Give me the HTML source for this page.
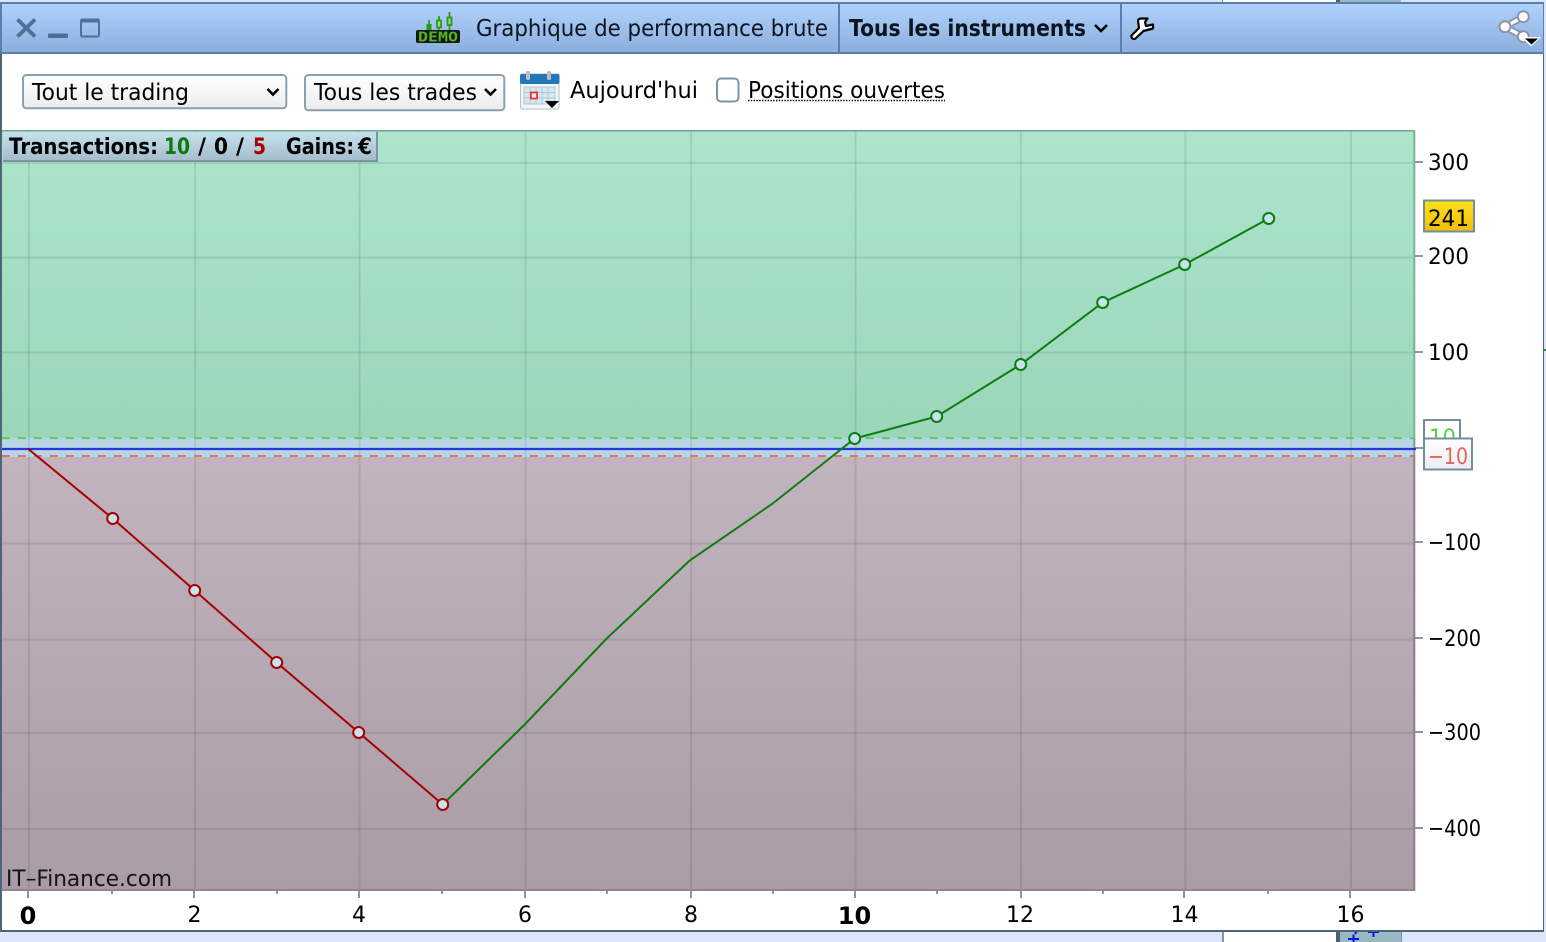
<!DOCTYPE html>
<html><head><meta charset="utf-8"><style>
html,body{margin:0;padding:0;background:#dce6fb;width:1546px;height:942px;overflow:hidden}
svg{display:block}
text{font-family:"DejaVu Sans","Liberation Sans",sans-serif;fill:#000}
</style></head><body>
<svg width="1546" height="942" viewBox="0 0 1546 942" xmlns="http://www.w3.org/2000/svg">
<defs>
<linearGradient id="tb" x1="0" y1="0" x2="0" y2="1"><stop offset="0" stop-color="#afd2fd"/><stop offset="1" stop-color="#8baedd"/></linearGradient>
<linearGradient id="gr" x1="0" y1="0" x2="0" y2="1"><stop offset="0" stop-color="#ace5cc"/><stop offset="1" stop-color="#9bd5ba"/></linearGradient>
<linearGradient id="rd" x1="0" y1="0" x2="0" y2="1"><stop offset="0" stop-color="#c2b4be"/><stop offset="1" stop-color="#a99ca6"/></linearGradient>
<linearGradient id="sel" x1="0" y1="0" x2="0" y2="1"><stop offset="0" stop-color="#ffffff"/><stop offset="1" stop-color="#ececec"/></linearGradient>
<linearGradient id="lab" x1="0" y1="0" x2="0" y2="1"><stop offset="0" stop-color="#c5e2ef"/><stop offset="1" stop-color="#a4bcc9"/></linearGradient>
<linearGradient id="yel" x1="0" y1="0" x2="0" y2="1"><stop offset="0" stop-color="#ffe11a"/><stop offset="1" stop-color="#f2bd06"/></linearGradient>
<linearGradient id="wh" x1="0" y1="0" x2="0" y2="1"><stop offset="0" stop-color="#ffffff"/><stop offset="1" stop-color="#ececec"/></linearGradient>
</defs>

<!-- backdrop -->
<rect x="0" y="0" width="1546" height="942" fill="#dce6fb"/>
<rect x="1223" y="0" width="113" height="2" fill="#fff"/>
<rect x="1222" y="0" width="1" height="2" fill="#6f8da0"/>
<rect x="1336" y="0" width="4" height="2" fill="#4a6272"/>
<rect x="1340" y="0" width="61" height="2" fill="#9ab8c4"/>
<rect x="1224" y="932" width="112" height="10" fill="#fff"/>
<rect x="1222" y="932" width="2" height="10" fill="#7d97a8"/>
<rect x="1336" y="932" width="4" height="10" fill="#4a6272"/>
<rect x="1340" y="932" width="61" height="10" fill="#9ab8c4"/>
<rect x="1401" y="932" width="1" height="10" fill="#7d97a8"/>
<path d="M1348 939h11M1353.500 934.500v8M1355 934l2-3M1368 932h11M1373.500 932v5" stroke="#0a14e6" stroke-width="2" fill="none"/>
<rect x="1544" y="349" width="2" height="2" fill="#2a8a3a"/>

<!-- window -->
<rect x="0" y="2" width="1544" height="930" fill="#4d6676"/>
<rect x="2" y="4" width="1541" height="926" fill="#fff"/>

<!-- title bar -->
<rect x="0" y="2" width="1544" height="52" fill="#5b7eac"/>
<rect x="2" y="4" width="1541" height="48" fill="url(#tb)"/>
<rect x="838" y="4" width="2" height="48" fill="#5b7eac"/>
<rect x="1120" y="4" width="2" height="48" fill="#5b7eac"/>

<path d="M17.500 19.500L35 36.500M35 19.500L17.500 36.500" stroke="#4f7096" stroke-width="3.800" fill="none"/>
<rect x="48" y="33.500" width="20" height="4.500" rx="1" fill="#4f7096"/>
<rect x="81" y="19.500" width="18" height="17" rx="1.500" fill="none" stroke="#4f7096" stroke-width="2"/>
<rect x="80.500" y="18.500" width="19" height="4" rx="1" fill="#4f7096"/>

<!-- demo icon -->
<rect x="416" y="30" width="44" height="13" rx="2" fill="#0d1a0d"/>
<text x="418" y="41.500" font-size="13" font-weight="bold" textLength="40" lengthAdjust="spacingAndGlyphs" style="fill:#58b022;font-family:'DejaVu Sans Mono',monospace">DEMO</text>
<path d="M429 20v10M439 16v14M449.500 12v18" stroke="#2a9a1c" stroke-width="1.800"/>
<rect x="426.500" y="24" width="5" height="6" fill="#2a9a1c"/>
<rect x="437" y="20.500" width="4" height="7" fill="#a9d08a" stroke="#2a9a1c" stroke-width="1.800"/>
<rect x="447.500" y="17.500" width="4" height="7.500" fill="#a9d08a" stroke="#2a9a1c" stroke-width="1.800"/>

<text x="476" y="36" font-size="23" textLength="352" lengthAdjust="spacingAndGlyphs" style="fill:#0c1420">Graphique de performance brute</text>
<text x="849" y="36" font-size="23" font-weight="bold" textLength="237" lengthAdjust="spacingAndGlyphs" style="fill:#0c1420">Tous les instruments</text>
<path d="M1095 25l6 6 6-6" fill="none" stroke="#000" stroke-width="2.600"/>

<!-- wrench -->
<path d="M1140 18.500h7.500l-2.500 3.500 1 4 7-1.500v4l-9.500 2.500-8 7.500q-1.500 1-3 0t-1-3l7.500-7.500-1-7q0-2 2.500-2.500z" fill="#fff" stroke="#000" stroke-width="2.200" stroke-linejoin="round"/>

<!-- share -->
<path d="M1523.300 16.700L1505 26.700L1523.300 36.700" fill="none" stroke="#8b95a3" stroke-width="7"/>
<path d="M1523.300 16.700L1505 26.700L1523.300 36.700" fill="none" stroke="#fff" stroke-width="3.400"/>
<circle cx="1523.300" cy="16.700" r="5.500" fill="#fff" stroke="#8b95a3" stroke-width="2"/>
<circle cx="1505" cy="26.700" r="5.500" fill="#fff" stroke="#8b95a3" stroke-width="2"/>
<circle cx="1523.300" cy="36.700" r="5.500" fill="#fff" stroke="#8b95a3" stroke-width="2"/>
<path d="M1521 37h20l-10 9.500z" fill="#fff"/>
<path d="M1525 38.500h13l-6.500 6z" fill="#000"/>

<!-- toolbar -->
<rect x="23" y="75" width="263.300" height="33.300" rx="3.500" fill="url(#sel)" stroke="#8aa0ad" stroke-width="2"/>
<text x="32" y="100" font-size="23.500" textLength="157" lengthAdjust="spacingAndGlyphs">Tout le trading</text>
<path d="M267.500 89l5.500 5.500 5.500-5.500" fill="none" stroke="#000" stroke-width="2.600"/>
<rect x="305" y="75" width="199.300" height="35.300" rx="3.500" fill="url(#sel)" stroke="#8aa0ad" stroke-width="2"/>
<text x="314" y="100" font-size="23.500" textLength="163" lengthAdjust="spacingAndGlyphs">Tous les trades</text>
<path d="M485 89l5.500 5.500 5.500-5.500" fill="none" stroke="#000" stroke-width="2.600"/>

<!-- calendar -->
<rect x="520.500" y="74" width="38.500" height="35" rx="2" fill="#f4f6f7" stroke="#b3bfc6"/>
<rect x="520" y="74" width="39.500" height="10" rx="2" fill="#2277b8"/>
<rect x="526" y="71" width="4" height="9" rx="1.500" fill="#b5bec6"/>
<rect x="547" y="71" width="4" height="9" rx="1.500" fill="#b5bec6"/>
<path d="M524 87h31v17h-31zM524 92.500h31M524 98h31M530 87v17M536 87v17M542 87v17M548 87v17" fill="#dbe7ee" stroke="#a8c8d8" stroke-width="1"/>
<rect x="531" y="92.500" width="6" height="6" fill="#fff" stroke="#f0303a" stroke-width="1.800"/>
<path d="M545 101h14l-7 7z" fill="#000"/>

<text x="570" y="98" font-size="23.500" textLength="128" lengthAdjust="spacingAndGlyphs">Aujourd'hui</text>
<rect x="717" y="78.500" width="21.500" height="23" rx="4" fill="#fff" stroke="#7d94a3" stroke-width="2"/>
<text x="748" y="98" font-size="23.500" textLength="197" lengthAdjust="spacingAndGlyphs">Positions ouvertes</text>
<line x1="748" y1="100.500" x2="945" y2="100.500" stroke="#000" stroke-width="1.400" stroke-dasharray="1.400 1.400"/>

<!-- chart bg -->
<rect x="2" y="130" width="1413" height="308" fill="url(#gr)"/>
<rect x="2" y="438" width="1413" height="19" fill="#b7d7e6"/>
<rect x="2" y="457" width="1413" height="433" fill="url(#rd)"/>
<rect x="2" y="130" width="1413" height="1.500" fill="#74a592"/>
<rect x="2" y="889" width="1413" height="2" fill="#94858f"/>
<rect x="1413.300" y="130" width="2" height="308" fill="#7eb19b"/>
<rect x="1413.300" y="438" width="2" height="19" fill="#7f9aa6"/>
<rect x="1413.300" y="457" width="2" height="434" fill="#8b7f88"/>

<!-- grid -->
<g stroke="#000" stroke-opacity=".085" stroke-width="2">
<path d="M29 131v758M195 131v758M359.500 131v758M525.500 131v758M691 131v758M855.500 131v758M1021 131v758M1185.300 131v758M1351 131v758"/>
<path d="M2 163h1411M2 257.500h1411M2 352.500h1411M2 543.500h1411M2 639.500h1411M2 733h1411M2 829h1411"/>
</g>

<!-- axes ticks -->
<g stroke="#748f9e" stroke-width="1.800">
<path d="M1415 162h8M1415 256h8M1415 352h8M1415 448h8M1415 542h8M1415 638h8M1415 732h8M1415 828h8"/>
<path d="M28 891v7M194 891v7M359 891v7M525 891v7M691 891v7M855 891v7M1021 891v7M1184 891v7M1350 891v7"/>
<path d="M112 891v3M277 891v3M442 891v3M607 891v3M773 891v3M937 891v3M1103 891v3M1268 891v3"/>
</g>

<!-- level lines -->
<line x1="2" y1="438.200" x2="1415" y2="438.200" stroke="#4fd24f" stroke-width="1.800" stroke-dasharray="8 8"/>
<line x1="2" y1="456" x2="1415" y2="456" stroke="#e2645f" stroke-width="1.800" stroke-dasharray="8 8"/>
<line x1="2" y1="449" x2="1416" y2="449" stroke="#2a35d8" stroke-width="2.300"/>

<!-- curve -->
<g transform="translate(-.3 -.5)">
<polyline points="28,449 113,519 195,591 277,663 359,733 443,805" fill="none" stroke="#a80000" stroke-width="2"/>
<polyline points="443,805 525,725 607,639 690,561 773,504 855,439 937,417 1021,365 1103,303 1185,265 1269,219" fill="none" stroke="#0d7d0d" stroke-width="2"/>
<g fill="#c9e3ee" stroke="#a80000" stroke-width="2">
<circle cx="113" cy="519" r="5.500"/><circle cx="195" cy="591" r="5.500"/><circle cx="277" cy="663" r="5.500"/><circle cx="359" cy="733" r="5.500"/><circle cx="443" cy="805" r="5.500"/>
</g>
<g fill="#c9e3ee" stroke="#0d7d0d" stroke-width="2">
<circle cx="855" cy="439" r="5.500"/><circle cx="937" cy="417" r="5.500"/><circle cx="1021" cy="365" r="5.500"/><circle cx="1103" cy="303" r="5.500"/><circle cx="1185" cy="265" r="5.500"/><circle cx="1269" cy="219" r="5.500"/>
</g>
</g>

<!-- info label -->
<rect x="3" y="132" width="374" height="29" fill="url(#lab)"/>
<rect x="3" y="160" width="375" height="2" fill="#7d95a3"/>
<rect x="376" y="132" width="2" height="30" fill="#7d95a3"/>
<g font-size="22.500" font-weight="bold">
<text x="9" y="154" textLength="149" lengthAdjust="spacingAndGlyphs">Transactions:</text>
<text x="164" y="154" textLength="26" lengthAdjust="spacingAndGlyphs" style="fill:#0c7a0c">10</text>
<text x="198" y="154" textLength="8" lengthAdjust="spacingAndGlyphs">/</text>
<text x="214" y="154" textLength="14" lengthAdjust="spacingAndGlyphs">0</text>
<text x="236" y="154" textLength="8" lengthAdjust="spacingAndGlyphs">/</text>
<text x="253" y="154" textLength="13" lengthAdjust="spacingAndGlyphs" style="fill:#a80000">5</text>
<text x="286" y="154" textLength="68" lengthAdjust="spacingAndGlyphs">Gains:</text>
<text x="358" y="154" textLength="14" lengthAdjust="spacingAndGlyphs">€</text>
</g>

<text x="6" y="886" font-size="22" textLength="166" lengthAdjust="spacingAndGlyphs" style="fill:#15121a">IT–Finance.com</text>

<!-- y axis labels -->
<g font-size="22.500">
<text x="1428" y="170" textLength="41" lengthAdjust="spacingAndGlyphs">300</text>
<text x="1428" y="264" textLength="41" lengthAdjust="spacingAndGlyphs">200</text>
<text x="1428" y="360" textLength="41" lengthAdjust="spacingAndGlyphs">100</text>
<text x="1428" y="550" textLength="53" lengthAdjust="spacingAndGlyphs">−100</text>
<text x="1428" y="646" textLength="53" lengthAdjust="spacingAndGlyphs">−200</text>
<text x="1428" y="740" textLength="53" lengthAdjust="spacingAndGlyphs">−300</text>
<text x="1428" y="836" textLength="53" lengthAdjust="spacingAndGlyphs">−400</text>
</g>

<!-- value tags -->
<rect x="1424" y="200.500" width="50" height="31" fill="url(#yel)" stroke="#748c9c" stroke-width="2"/>
<text x="1428" y="226" font-size="22.500" textLength="41" lengthAdjust="spacingAndGlyphs">241</text>

<rect x="1424" y="420" width="36" height="24" fill="#fff" stroke="#748c9c" stroke-width="2"/>
<text x="1429" y="445" font-size="22.500" textLength="27" lengthAdjust="spacingAndGlyphs" style="fill:#4fd24f">10</text>
<rect x="1424" y="438.500" width="48" height="31" fill="url(#wh)" stroke="#748c9c" stroke-width="2"/>
<text x="1428" y="464" font-size="22.500" textLength="40" lengthAdjust="spacingAndGlyphs" style="fill:#e2645f">−10</text>

<!-- x axis labels -->
<g font-size="22" text-anchor="middle">
<text x="28" y="924" font-weight="bold" font-size="24">0</text>
<text x="194.500" y="922">2</text>
<text x="359" y="922">4</text>
<text x="525" y="922">6</text>
<text x="691" y="922">8</text>
<text x="854.500" y="924" font-weight="bold" font-size="24">10</text>
<text x="1020" y="922">12</text>
<text x="1184.500" y="922">14</text>
<text x="1350.500" y="922">16</text>
</g>
</svg>
</body></html>
